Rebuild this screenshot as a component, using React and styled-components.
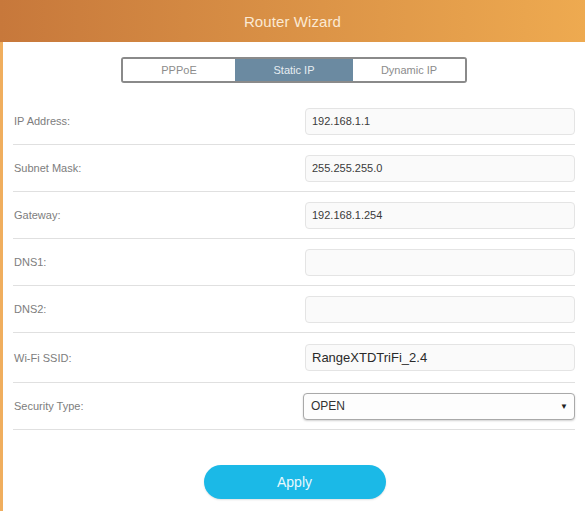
import React from 'react'
import styled, { createGlobalStyle } from 'styled-components'

const GlobalStyle = createGlobalStyle`
    html, body {
        margin: 0;
        padding: 0;
        background: #ffffff;
        font-family: "Liberation Sans", Arial, sans-serif;
    }
`

const fields = [
    { label: 'IP Address:', value: '192.168.1.1' },
    { label: 'Subnet Mask:', value: '255.255.255.0' },
    { label: 'Gateway:', value: '192.168.1.254' },
    { label: 'DNS1:', value: '' },
    { label: 'DNS2:', value: '' },
    { label: 'Wi-Fi SSID:', value: 'RangeXTDTriFi_2.4', big: true },
]

const tabs = ['PPPoE', 'Static IP', 'Dynamic IP']

function App() {
    return (
        <Page>
            <GlobalStyle />
            <Header>Router Wizard</Header>
            <Body>
                <TabBar>
                    <Tabs>
                        {tabs.map((t, i) => (
                            <Tab key={t} active={i === 1}>{t}</Tab>
                        ))}
                    </Tabs>
                </TabBar>

                <Form>
                    {fields.map(f => (
                        <Row key={f.label} tall={f.big}>
                            <Label>{f.label}</Label>
                            <Field readOnly value={f.value} big={f.big} />
                        </Row>
                    ))}
                    <Row>
                        <Label>Security Type:</Label>
                        <SelectBox>
                            <span>OPEN</span>
                            <Caret>▼</Caret>
                        </SelectBox>
                    </Row>
                </Form>

                <Actions>
                    <ApplyButton>Apply</ApplyButton>
                </Actions>
            </Body>
        </Page>
    )
}

export default App

const Page = styled.div`
    width: 585px;
    height: 511px;
    overflow: hidden;
    display: flex;
    flex-direction: column;
`

const Header = styled.div`
    height: 42px;
    flex-shrink: 0;
    display: flex;
    align-items: center;
    justify-content: center;
    background: linear-gradient(90deg, #c7783b 0%, #d88f45 45%, #eeaa50 100%);
    color: #fbe9d3;
    font-size: 15px;
    letter-spacing: 0.1px;
`

const Body = styled.div`
    flex: 1;
    border-left: 3px solid #f0ae5e;
`

const TabBar = styled.div`
    display: flex;
    justify-content: center;
    padding: 15px 0 15px 0;
`

const Tabs = styled.div`
    display: flex;
    height: 22px;
    border: 2px solid #8a8a8a;
    border-radius: 3px;
    overflow: hidden;
`

const Tab = styled.div`
    width: ${props => props.active ? '118px' : '112px'};
    display: flex;
    align-items: center;
    justify-content: center;
    font-size: 11px;
    color: ${props => props.active ? '#e6edf2' : '#8c8c8c'};
    background: ${props => props.active ? '#6b8aa1' : '#ffffff'};
`

const Form = styled.div`
    padding: 0 10px 0 10px;
`

const Row = styled.div`
    display: flex;
    align-items: center;
    justify-content: space-between;
    height: ${props => props.tall ? '49px' : '46px'};
    border-bottom: 1px solid #e0e0e0;
`

const Label = styled.div`
    font-size: 11px;
    color: #7d7d7d;
    padding-left: 1px;
`

const Field = styled.input`
    box-sizing: border-box;
    width: 270px;
    height: 27px;
    padding: 0 6px;
    border: 1px solid #e4e4e4;
    border-radius: 4px;
    background: #fafafa;
    font-family: "Liberation Sans", Arial, sans-serif;
    font-size: ${props => props.big ? '13px' : '11px'};
    color: ${props => props.big ? '#2a2a2a' : '#3a3a3a'};
    outline: none;
`

const SelectBox = styled.div`
    box-sizing: border-box;
    width: 272px;
    height: 27px;
    display: flex;
    align-items: center;
    justify-content: space-between;
    padding: 0 6px 0 7px;
    border: 1px solid #a9a9a9;
    border-radius: 4px;
    background: #fdfdfd;
    box-shadow: 0 1px 2px rgba(0, 0, 0, 0.18);
    font-size: 12px;
    color: #333333;
`

const Caret = styled.span`
    font-size: 8px;
    color: #222222;
`

const Actions = styled.div`
    display: flex;
    justify-content: center;
    padding-top: 35px;
    padding-left: 1px;
`

const ApplyButton = styled.div`
    width: 182px;
    height: 34px;
    display: flex;
    align-items: center;
    justify-content: center;
    border-radius: 17px;
    background: #1bb9e7;
    color: #e9f8fd;
    font-size: 14px;
    box-shadow: 0 1px 2px rgba(0, 0, 0, 0.12);
    cursor: pointer;
`
